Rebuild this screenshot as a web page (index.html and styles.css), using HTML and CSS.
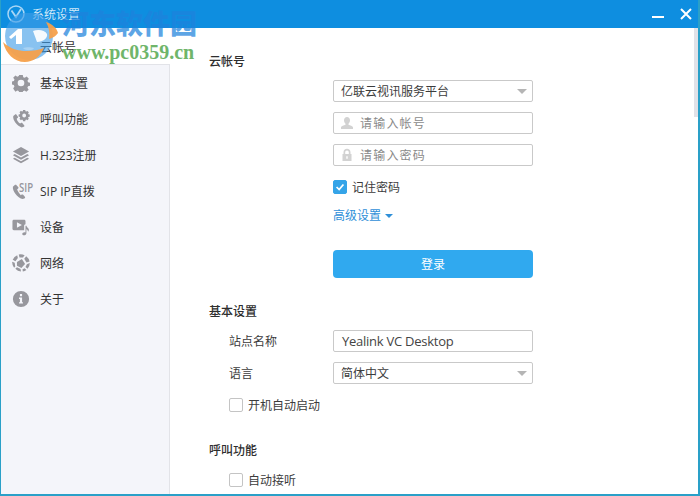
FILE: index.html
```html
<!DOCTYPE html>
<html lang="zh-CN">
<head>
<meta charset="utf-8">
<title>系统设置</title>
<link rel="stylesheet" href="styles.css">
</head>
<body>
<div class="window">
  <header class="titlebar">
    <svg class="app-logo" viewBox="0 0 20 20"><circle cx="10" cy="10" r="8" fill="none" stroke="#a9d6f5" stroke-width="1.5"/><path d="M5.500 6.500 10 13l5-8" fill="none" stroke="#a9d6f5" stroke-width="1.800"/></svg>
    <span class="title">系统设置</span>
    <div class="win-buttons">
      <svg class="win-btn" viewBox="0 0 14 14"><path d="M1 10h12" stroke="#fff" stroke-width="2"/></svg>
      <svg class="win-btn" viewBox="0 0 14 14"><path d="M2 2l10 10M12 2 2 12" stroke="#fff" stroke-width="2"/></svg>
    </div>
  </header>
  <div class="main">
    <nav class="sidebar">
      <div class="nav-item active"><span class="nav-icon"></span><span>云帐号</span></div>
      <div class="nav-item">
        <svg class="nav-icon" viewBox="0 0 20 20"><path fill-rule="evenodd" d="M8 1h4l.5 2.600 1.600.7 2.200-1.500 2.400 2.600-1.500 2.100.7 1.600 2.100.5v3.500l-2.200.5-.7 1.600 1.400 2.200-2.600 2.400-2-1.400-1.700.7-.4 2.300H8l-.5-2.400-1.600-.7-2.100 1.400L1.300 16l1.400-2-.7-1.700L0 11.800V8.300l2.100-.5.7-1.600-1.500-2.100 2.500-2.500 2.100 1.400 1.600-.7zM10 6.300a3.700 3.700 0 1 0 0 7.400 3.700 3.700 0 0 0 0-7.400z"/></svg>
        <span>基本设置</span>
      </div>
      <div class="nav-item">
        <svg class="nav-icon" viewBox="0 0 20 20"><path d="M3.200 5.200 1.400 6.800C.6 11 5.200 17.600 10.700 19.500l2.300-.8c.9-.4 1-1.200.5-1.800l-1.900-2.200c-.5-.5-1.100-.5-1.700-.2l-.9.6C7.300 13.900 5.600 11.600 5.200 9.600l.9-.6c.6-.4.8-1 .5-1.600L5 5.300c-.4-.6-1.200-.6-1.800-.1z"/><path fill-rule="evenodd" d="M12.300 0h2.400l.3 1.400.9.4 1.200-.8 1.600 1.600-.8 1.200.4.9 1.400.3v2.400l-1.400.3-.4.9.8 1.200-1.600 1.600-1.200-.8-.9.4-.3 1.400h-2.400l-.3-1.400-.9-.4-1.200.8-1.600-1.600.8-1.200-.4-.9L7.300 7.300V4.900l1.400-.3.4-.9-.8-1.200 1.600-1.600 1.200.8.9-.4zM13.500 4a2.100 2.100 0 1 0 0 4.200 2.100 2.100 0 0 0 0-4.200z"/></svg>
        <span>呼叫功能</span>
      </div>
      <div class="nav-item">
        <svg class="nav-icon" viewBox="0 0 20 20"><path d="M10 1 19 6l-9 5-9-5z"/><path d="m3 9-2 1.200 9 5 9-5L17 9l-7 3.900z"/><path d="m3 13-2 1.200 9 5 9-5-2-1.200-7 3.900z"/></svg>
        <span>H.323注册</span>
      </div>
      <div class="nav-item">
        <span class="sip-icon">
          <svg class="nav-icon" viewBox="0 0 20 20"><path d="M2.800 3.500 1 5.200C.4 9.800 5.500 17 11.500 19l2.300-.8c.9-.4 1-1.200.5-1.800l-1.900-2.200c-.5-.5-1.100-.5-1.700-.2l-.9.6C8 12.500 6.200 10 5.700 8l.9-.6c.6-.4.8-1 .5-1.600L5 3.500c-.5-.6-1.500-.6-2.200 0z"/></svg>
          <span class="sip-label">SIP</span>
        </span>
        <span>SIP IP直拨</span>
      </div>
      <div class="nav-item">
        <svg class="nav-icon" viewBox="0 0 20 20"><path fill-rule="evenodd" d="M2 2h11.500c.8 0 1.500.7 1.500 1.500V7c-1 .2-1.500.8-1.500 1.700v4.800H2c-.8 0-1.500-.7-1.500-1.500V3.500C.5 2.700 1.200 2 2 2zm3.500 2.800v6L11 7.800z"/><path d="M15 8.500h1.100c.2 1.500 1.900 2.200 2.500 3.800.3 1 .1 2.200-.6 3-.2-1.500-1-2.500-2-2.900V17c0 1.300-1.200 2.300-2.600 2.300-1.200 0-2-.6-2-1.600 0-1.100 1.200-1.900 2.500-1.900.4 0 .8.1 1.100.2z"/></svg>
        <span>设备</span>
      </div>
      <div class="nav-item">
        <svg class="nav-icon" viewBox="0 0 20 20"><path d="M7.500.5A10 10 0 0 1 14 1.300L12.200 4 8.300 3.800z"/><path d="M15.800 2.500a10 10 0 0 1 3.700 5.700l-3.400 1.300-2.500-4.300z"/><path d="M5.800 1.400 6.500 4.500 3.800 8 .8 6.500a10 10 0 0 1 5-5.100z"/><path d="M.2 8.500 3 9.800l.6 4.200-1.300 1.200A10 10 0 0 1 .2 8.500z"/><path d="m5.500 9 5.500-3.500 3.500 5.500-4 4.500L5.500 13z"/><path d="m16.500 11.300 3.300-1.300a10 10 0 0 1-2.500 6.500l-2.300-2z"/><path d="m3.700 16.500 1.800-1.800 4 2 .5 2.800a10 10 0 0 1-6.300-3z"/><path d="m11.700 17 2.300-1.200 2 2a10 10 0 0 1-4 1.700z"/></svg>
        <span>网络</span>
      </div>
      <div class="nav-item">
        <svg class="nav-icon" viewBox="0 0 20 20"><path fill-rule="evenodd" d="M10 1a9 9 0 1 1 0 18 9 9 0 0 1 0-18zM8.800 4.500v2.400h2.400V4.500zM7.800 8.400v1.500h1v3.600h-1V15h4.400v-1.500h-1V8.400z"/></svg>
        <span>关于</span>
      </div>
    </nav>
    <section class="content">
      <h2 class="section-title first">云帐号</h2>
      <div class="stack account">
        <div class="field select"><span>亿联云视讯服务平台</span><i class="caret"></i></div>
        <div class="field placeholder">
          <svg class="field-icon" viewBox="0 0 14 14"><path d="M7 1C5.200 1 4 2.300 4 4.200 4 5.700 4.700 7 5.500 7.700v1C4 9.400 1 10 1 11.500V13h12v-1.500c0-1.500-3-2.100-4.500-2.800v-1C9.300 7 10 5.700 10 4.200 10 2.300 8.800 1 7 1z"/></svg>
          <span>请输入帐号</span>
        </div>
        <div class="field placeholder">
          <svg class="field-icon" viewBox="0 0 14 14"><path fill-rule="evenodd" d="M7 .8c-2.100 0-3.500 1.500-3.500 3.500V6H2.500v7h9V6h-1V4.300C10.500 2.300 9.100.8 7 .8zM5.200 6V4.300C5.200 3.200 5.900 2.400 7 2.400s1.800.8 1.800 1.900V6zM6.300 8.300h1.400v2.500H6.300z"/></svg>
          <span>请输入密码</span>
        </div>
        <label class="check-row">
          <span class="check checked"><svg viewBox="0 0 14 14"><path d="m3 7 3 3 5-6" fill="none" stroke="#fff" stroke-width="2"/></svg></span>
          <span>记住密码</span>
        </label>
        <div class="advanced">高级设置<i class="mini-caret"></i></div>
        <button class="login" type="button">登录</button>
      </div>

      <h2 class="section-title basic">基本设置</h2>
      <div class="form-row name-row">
        <span class="row-label">站点名称</span>
        <div class="field value"><span>Yealink VC Desktop</span></div>
      </div>
      <div class="form-row lang-row">
        <span class="row-label">语言</span>
        <div class="field select"><span>简体中文</span><i class="caret"></i></div>
      </div>
      <label class="check-row indented boot">
        <span class="check"></span>
        <span>开机自动启动</span>
      </label>

      <h2 class="section-title call">呼叫功能</h2>
      <label class="check-row indented auto">
        <span class="check"></span>
        <span>自动接听</span>
      </label>
    </section>
    <div class="scrollbar"></div>
  </div>
</div>
<div class="watermark">
  <svg class="wm-logo" viewBox="0 0 56 50">
    <circle cx="27" cy="23" r="24" fill="#3f9ce6" fill-opacity=".62"/>
    <path d="M1 29C8 36 17 38 24 38c7 0 13-1 18-3-4 9-11 14-19 14C12 49 4 41 1 29z" fill="#f5a04a" fill-opacity=".95"/>
    <path d="M44 9c6 2 11 6 12 11-2 3-5 5-9 6 1-6 0-12-3-17z" fill="#f5a04a" fill-opacity=".95"/>
    <path d="M7 24l9-8h4v15h-6V22l-5 4z" fill="#fff"/>
    <path d="M31 18c5-2 12-1 14 3 1 4-4 8-10 8z" fill="#fff" fill-opacity=".92"/>
    <path d="M21 35c3-1 8-1 11 0-1 3-9 3-11 0z" fill="#a8d2f3"/>
  </svg>
  <div class="wm-cn">河东软件园</div>
  <div class="wm-url">www.pc0359.cn</div>
</div>
</body>
</html>
```
FILE: styles.css
```css
* { box-sizing: border-box; }
html, body { margin: 0; height: 100%; overflow: hidden; }
body {
  font-family: "Open Sans", "Noto Sans CJK SC", sans-serif;
  font-size: 12px;
  color: #3c3c3c;
  position: relative;
}
.window {
  width: 700px;
  height: 496px;
  display: flex;
  flex-direction: column;
  border-left: 1px solid #2aa0c8;
  border-right: 2px solid #2aa0c8;
  border-bottom: 2px solid #2aa0c8;
  background: #fff;
  overflow: hidden;
}
.titlebar {
  height: 28px;
  flex: none;
  margin-left: -1px;
  margin-right: -2px;
  padding-left: 6px;
  background: #0e8ee0;
  display: flex;
  align-items: center;
  color: #cfe7f8;
}
.app-logo { width: 20px; height: 20px; flex: none; }
.title { margin-left: 6px; }
.win-buttons { margin-left: auto; display: flex; gap: 14.500px; padding-right: 7px; }
.win-btn { width: 14px; height: 14px; }
.main { flex: 1; display: flex; min-height: 0; position: relative; }
.sidebar {
  width: 169px;
  flex: none;
  background: #f4f5fa;
  border-right: 1px solid #e2e3e8;
  display: flex;
  flex-direction: column;
}
.nav-item {
  height: 36px;
  flex: none;
  display: flex;
  align-items: center;
  padding-left: 11px;
  gap: 10px;
  color: #333;
}
.nav-item.active {
  background: #fff;
  margin-right: -1px;
  height: 37px;
  border-bottom: 1px solid #e2e3e8;
  padding-top: 2px;
  position: relative;
}
.nav-icon { width: 18px; height: 18px; flex: none; fill: #97979d; }
.sip-icon { width: 18px; height: 18px; flex: none; position: relative; }
.sip-label {
  position: absolute;
  left: 7px;
  top: -3px;
  font-size: 12px;
  font-weight: 600;
  color: #97979d;
  transform: scaleX(.8);
  transform-origin: left top;
}
.content { flex: 1; padding-left: 39px; overflow: hidden; min-width: 0; }
.section-title { margin: 0; font-size: 12px; font-weight: 500; color: #2e2e2e; line-height: 16px; }
.section-title.first { margin-top: 26px; }
.stack { display: flex; flex-direction: column; width: 200px; margin-left: 124px; }
.account { margin-top: 10px; gap: 10px; }
.field {
  height: 22px;
  flex: none;
  border: 1px solid #c9c9c9;
  border-radius: 2px;
  display: flex;
  align-items: center;
  padding-left: 7px;
  background: #fff;
  position: relative;
}
.placeholder { color: #8a8a8a; padding-left: 6px; gap: 6px; letter-spacing: 1.200px; }
.field-icon { width: 14px; height: 14px; fill: #d2d2d2; flex: none; }
.caret {
  position: absolute;
  right: 5px;
  top: 8px;
  border-left: 5px solid transparent;
  border-right: 5px solid transparent;
  border-top: 5px solid #b5b5b5;
}
.check-row { display: flex; align-items: center; gap: 5px; height: 14px; }
.account .check-row { margin-top: 4px; }
.check {
  width: 14px;
  height: 14px;
  flex: none;
  border: 1px solid #c4c4c4;
  border-radius: 2px;
  background: #fff;
}
.check.checked { background: #35a4e8; border-color: #35a4e8; display: flex; }
.check.checked svg { width: 12px; height: 12px; }
.advanced { color: #2f8fd8; line-height: 16px; margin-top: 4px; display: flex; align-items: center; gap: 4px; }
.mini-caret {
  border-left: 4px solid transparent;
  border-right: 4px solid transparent;
  border-top: 4px solid #2f8fd8;
}
.login {
  height: 28px;
  margin-top: 16px;
  border: 0;
  border-radius: 4px;
  background: #30a9ef;
  color: #fff;
  font: inherit;
  padding: 0;
}
.section-title.basic { margin-top: 26px; }
.form-row { display: flex; align-items: center; margin-left: 20px; width: 304px; }
.row-label { width: 104px; flex: none; }
.form-row .field { width: 200px; }
.name-row { margin-top: 10px; }
.lang-row { margin-top: 10px; }
.value { font-size: 13px; letter-spacing: -.25px; padding-left: 8px; color: #444; }
.indented { margin-left: 20px; }
.boot { margin-top: 14px; }
.section-title.call { margin-top: 31px; }
.auto { margin-top: 14px; }
.scrollbar {
  position: absolute;
  right: 0;
  top: 0;
  width: 4px;
  height: 89px;
  background: #e1e2e8;
}
.watermark {
  position: absolute;
  left: 0;
  top: 0;
  width: 210px;
  height: 70px;
  pointer-events: none;
}
.wm-logo { position: absolute; left: 2px; top: 13px; width: 56px; height: 50px; }
.wm-cn {
  position: absolute;
  left: 62px;
  top: 7px;
  font-family: "Noto Sans CJK SC", sans-serif;
  font-weight: 900;
  font-size: 27px;
  line-height: 32px;
  color: rgba(30, 130, 220, .72);
  white-space: nowrap;
}
.wm-url {
  position: absolute;
  left: 62px;
  top: 39px;
  font-family: "Liberation Serif", serif;
  font-weight: 700;
  font-size: 20px;
  line-height: 26px;
  color: #6fb56a;
  white-space: nowrap;
}
```
